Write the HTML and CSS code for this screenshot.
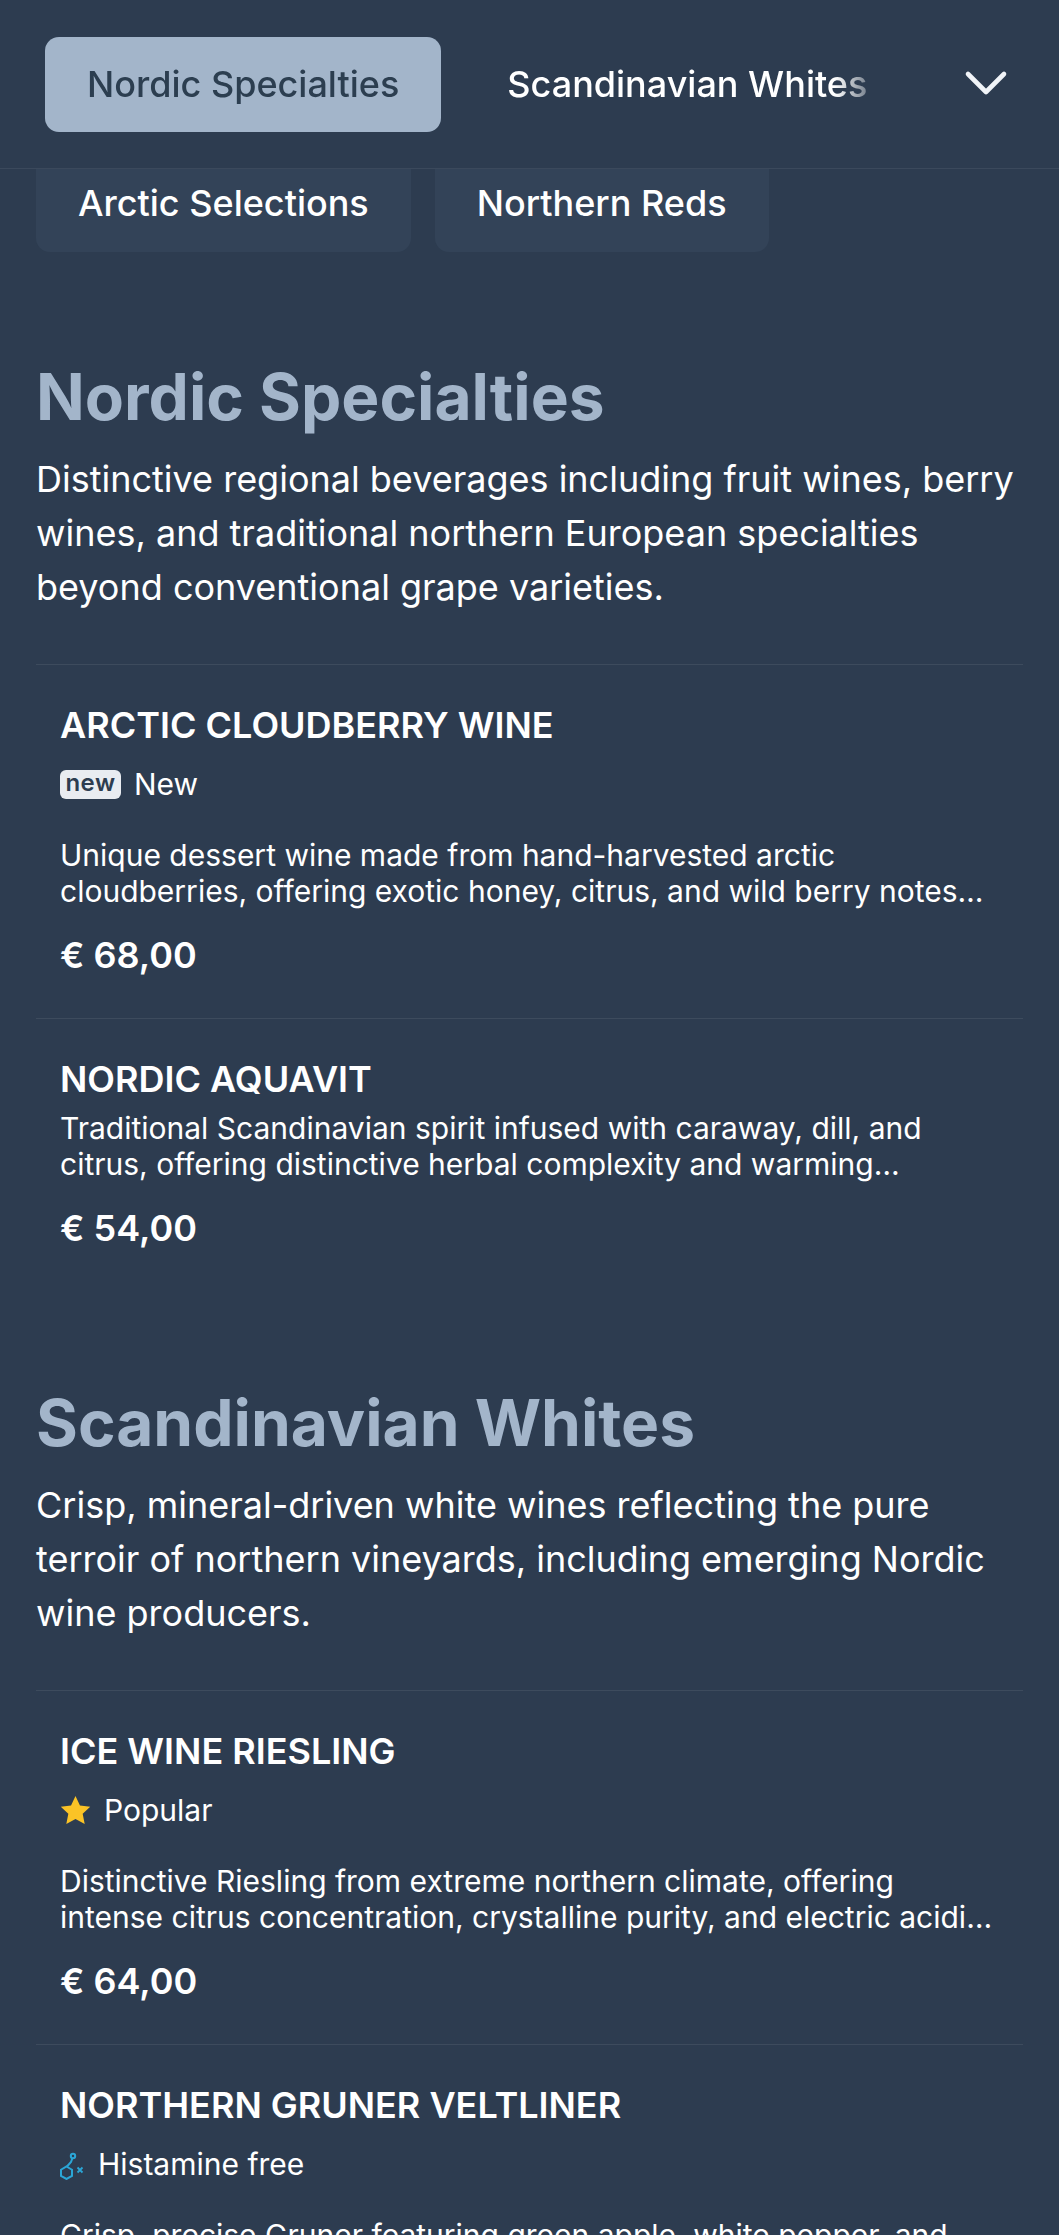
FILE: index.html
```html
<!DOCTYPE html>
<html lang="en">
<head>
    <meta charset="UTF-8">
    <meta name="viewport" content="width=device-width, initial-scale=1.0">
    <title>Wine Menu</title>
    <link rel="stylesheet" href="styles.css">
</head>
<body>
    <header class="tab-bar">
        <nav class="tab-track">
            <a class="tab tab-active">Nordic Specialties</a>
            <a class="tab">Scandinavian Whites</a>
        </nav>
        <button class="tab-toggle" aria-label="More categories">
            <svg width="44" height="28" viewBox="0 0 44 28" fill="none" stroke="#f1f4f8" stroke-width="4.6" stroke-linecap="round" stroke-linejoin="round">
                <path d="M4 4 L22 22 L40 4"/>
            </svg>
        </button>
    </header>

    <div class="chips">
        <a class="chip">Arctic Selections</a>
        <a class="chip">Northern Reds</a>
    </div>

    <main>
        <section class="menu-section">
            <h2>Nordic Specialties</h2>
            <p class="section-intro">Distinctive regional beverages including fruit wines, berry wines, and traditional northern European specialties beyond conventional grape varieties.</p>

            <article class="item">
                <h3>ARCTIC CLOUDBERRY WINE</h3>
                <div class="tag"><span class="tag-new">new</span>New</div>
                <p class="item-desc">Unique dessert wine made from hand-harvested arctic cloudberries, offering exotic honey, citrus, and wild berry notes with a long and gently sweet finish.</p>
                <div class="price">€ 68,00</div>
            </article>

            <article class="item">
                <h3>NORDIC AQUAVIT</h3>
                <p class="item-desc">Traditional Scandinavian spirit infused with caraway, dill, and citrus, offering distinctive herbal complexity and warming character for the cold nights.</p>
                <div class="price">€ 54,00</div>
            </article>
        </section>

        <section class="menu-section">
            <h2>Scandinavian Whites</h2>
            <p class="section-intro">Crisp, mineral-driven white wines reflecting the pure terroir of northern vineyards, including emerging Nordic wine producers.</p>

            <article class="item">
                <h3>ICE WINE RIESLING</h3>
                <div class="tag">
                    <svg class="tag-icon" width="31" height="31" viewBox="0 0 32 32">
                        <path d="M16 1 L20.6 10.8 L31.2 12.1 L23.4 19.4 L25.5 30 L16 24.7 L6.5 30 L8.6 19.4 L0.8 12.1 L11.4 10.8 Z" fill="#fbc326"/>
                    </svg>
                    Popular
                </div>
                <p class="item-desc">Distinctive Riesling from extreme northern climate, offering intense citrus concentration, crystalline purity, and electric acidity that carries through the finish.</p>
                <div class="price">€ 64,00</div>
            </article>

            <article class="item">
                <h3>NORTHERN GRUNER VELTLINER</h3>
                <div class="tag">
                    <svg class="tag-icon" width="25" height="32" viewBox="0 0 25 32" fill="none" stroke="#2ba6d6" stroke-width="2">
                        <path d="M6.5 18.5 L12 21.75 L12 28 L6.5 31 L1 28 L1 21.75 Z"/>
                        <path d="M7 18.5 L11 14 L12.4 10.2"/>
                        <circle cx="13" cy="8" r="2.2"/>
                        <path d="M17.5 19.5 L22.5 24.5 M22.5 19.5 L17.5 24.5" stroke-width="1.8"/>
                    </svg>
                    Histamine free
                </div>
                <p class="item-desc">Crisp, precise Gruner featuring green apple, white pepper, and subtle mineral notes with a clean, refreshing finish from cool northern slopes.</p>
                <div class="price">€ 58,00</div>
            </article>
        </section>
    </main>
</body>
</html>
```

FILE: styles.css
```css
html, body {
    height: 2235px;
    overflow: hidden;
}

body {
    margin: 0;
    background-color: #2d3c50;
    color: #fff;
    font-family: Inter, "Liberation Sans", sans-serif;
}

.tab-bar {
    display: flex;
    align-items: center;
    height: 168px;
    padding-left: 45px;
    border-bottom: 1px solid rgba(255, 255, 255, 0.07);
}

.tab-track {
    display: flex;
    flex: 1;
    gap: 24px;
    overflow: hidden;
    -webkit-mask-image: linear-gradient(to right, #000 calc(100% - 50px), transparent 100%);
    mask-image: linear-gradient(to right, #000 calc(100% - 50px), transparent 100%);
}

.tab {
    flex-shrink: 0;
    height: 95px;
    padding: 0 42px;
    border-radius: 14px;
    font-size: 36px;
    font-weight: 500;
    line-height: 95px;
}

.tab-active {
    background-color: #a3b5ca;
    color: #2c3e50;
}

.tab-toggle {
    display: flex;
    align-items: center;
    justify-content: center;
    width: 174px;
    height: 95px;
    padding: 0 0 0 28px;
    border: none;
    background: none;
}

.chips {
    display: flex;
    gap: 24px;
    height: 83px;
    margin: 0 36px;
}

.chip {
    padding: 0 42px 15px;
    border-radius: 0 0 14px 14px;
    background-color: #334358;
    font-size: 36px;
    font-weight: 500;
    line-height: 68px;
}

main {
    padding: 0 36px;
}

.menu-section {
    padding-top: 106px;
}

.menu-section + .menu-section {
    padding-top: 93px;
}

h2 {
    margin: 0 0 17px;
    color: #a3b5ca;
    font-size: 64px;
    font-weight: 700;
    line-height: 77px;
}

.section-intro {
    margin: 0 0 50px;
    font-size: 36px;
    line-height: 54px;
}

.item {
    padding: 38px 24px 40px;
    border-top: 1px solid rgba(255, 255, 255, 0.08);
}

h3 {
    margin: 0;
    font-size: 36px;
    font-weight: 600;
    line-height: 45px;
}

.tag {
    display: flex;
    align-items: center;
    gap: 13px;
    height: 44px;
    margin: 14px 0 31px;
    font-size: 30px;
}

.tag-icon {
    flex-shrink: 0;
}

.tag-new {
    width: 61px;
    height: 29px;
    border-radius: 6px;
    background-color: #e9ecf1;
    color: #2d3c50;
    font-size: 24px;
    font-weight: 600;
    letter-spacing: 0.5px;
    line-height: 25px;
    text-align: center;
}

.item-desc {
    display: -webkit-box;
    margin: 8px 0 24px;
    overflow: hidden;
    font-size: 30px;
    line-height: 36px;
    -webkit-box-orient: vertical;
    -webkit-line-clamp: 2;
}

.tag + .item-desc {
    margin-top: 0;
}

.price {
    font-size: 36px;
    font-weight: 600;
    line-height: 45px;
}
```
